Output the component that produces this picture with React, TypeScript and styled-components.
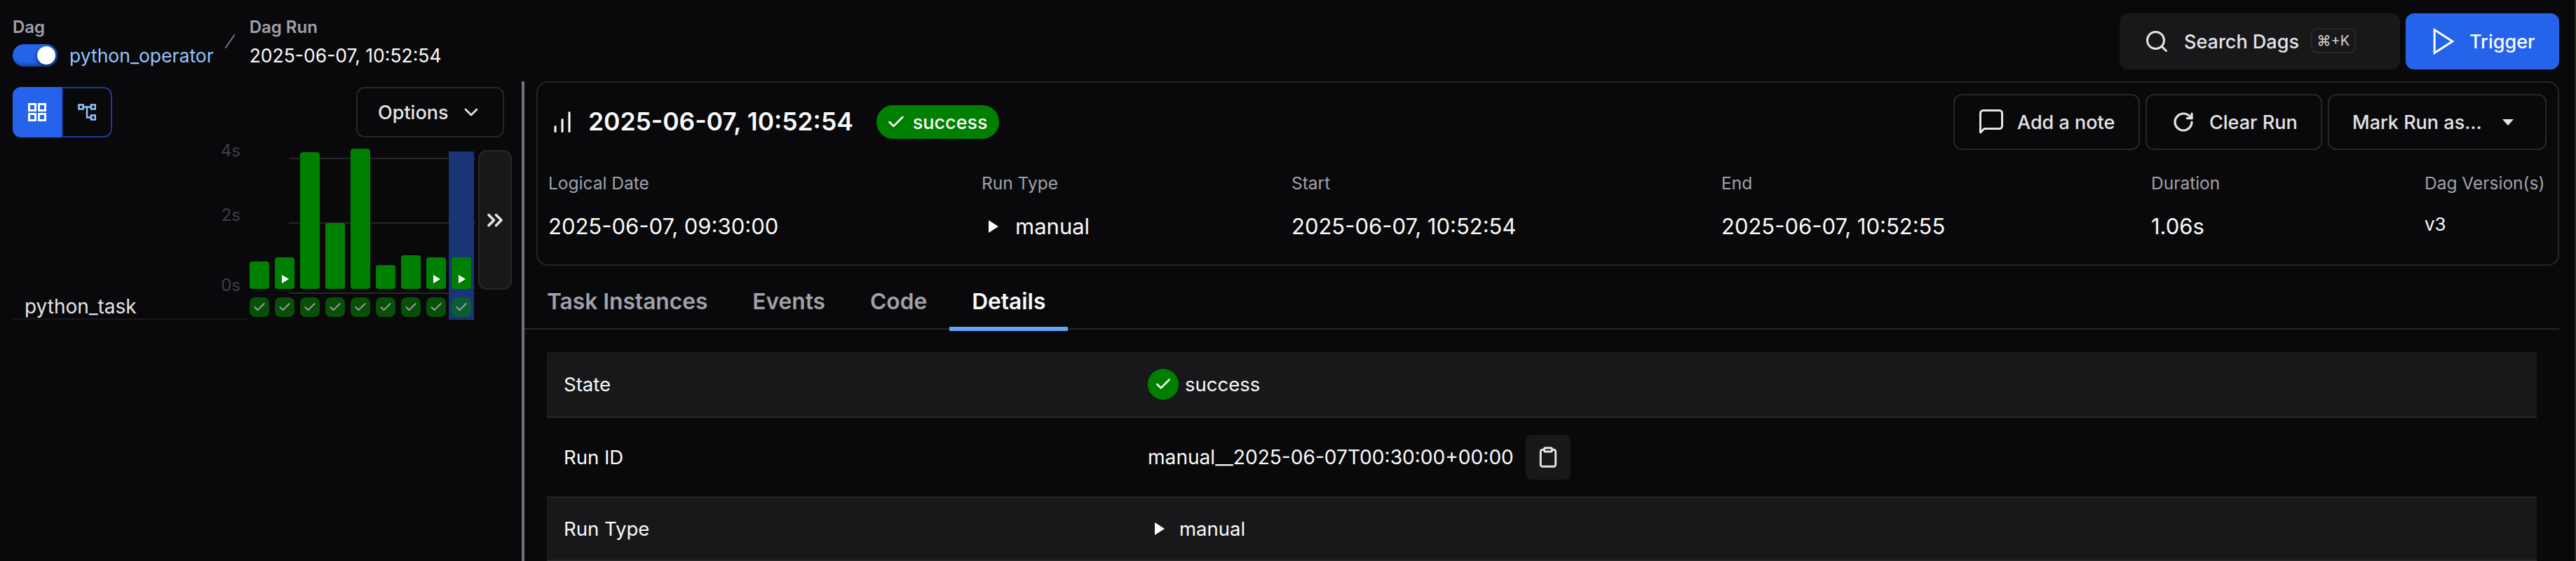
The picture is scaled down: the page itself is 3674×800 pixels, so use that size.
import { createGlobalStyle } from "styled-components";
import styled from "styled-components";
import { Check, ChevronDown, ChevronsRight, Clipboard, RotateCw, Search } from "lucide-react";

const GlobalStyle = createGlobalStyle`
  html, body {
    margin: 0;
    background: #09090b;
  }
  body {
    font-family: Inter, "Noto Sans", sans-serif;
    font-size: 27px;
    color: #fafafa;
    overflow: hidden;
  }
  * {
    box-sizing: border-box;
  }
`;

const Page = styled.div`
  width: 3674px;
  height: 800px;
  display: flex;
  flex-direction: column;
  background: #09090b;
  border-right: 2px solid #27272a;
  overflow: hidden;
`;

/* header */
const Header = styled.header`
  height: 116px;
  flex: none;
  display: flex;
  justify-content: space-between;
  padding: 19px 22px 0 18px;
`;

const Crumbs = styled.div`
  display: flex;
  padding-top: 10px;
`;

const Crumb = styled.div`
  display: flex;
  flex-direction: column;
`;

const CrumbLabel = styled.span`
  font-size: 24px;
  line-height: 20px;
  font-weight: 600;
  color: #a1a1aa;
`;

const CrumbRow = styled.div`
  margin-top: 14px;
  height: 32px;
  display: flex;
  align-items: center;
  gap: 17px;
  font-size: 26.5px;
  white-space: nowrap;
`;

const CrumbSlash = styled.svg`
  margin: 20px 21px 0 16px;
  width: 14px;
  height: 20px;
  stroke: #71717a;
  stroke-width: 2;
`;

const Switch = styled.span`
  position: relative;
  width: 64px;
  height: 32px;
  border-radius: 16px;
  background: #2563eb;
  box-shadow: inset -3px -3px 4px #1e3a8a;
`;

const SwitchKnob = styled.span`
  position: absolute;
  right: 3px;
  top: 3px;
  width: 26px;
  height: 26px;
  border-radius: 50%;
  background: #fff;
  box-shadow: -2px 2px 4px rgba(0, 0, 0, 0.35);
`;

const DagLink = styled.span`
  color: #93c5fd;
`;

const HeaderActions = styled.div`
  display: flex;
  gap: 8px;
  height: 80px;
`;

const SearchButton = styled.div`
  width: 400px;
  display: flex;
  align-items: center;
  padding-left: 35px;
  gap: 21px;
  border-radius: 12px;
  background: #18181b;
  font-weight: 500;
  color: #e4e4e7;
`;

const Kbd = styled.span`
  width: 64px;
  height: 36px;
  margin-left: -4px;
  margin-top: -2px;
  display: flex;
  align-items: center;
  justify-content: center;
  border: 2px solid #27272a;
  border-radius: 8px;
  font-size: 20px;
  font-weight: 400;
  color: #d4d4d8;
`;

const TriggerButton = styled.div`
  width: 219px;
  display: flex;
  align-items: center;
  padding-left: 32px;
  gap: 15px;
  border-radius: 12px;
  background: #2563eb;
  font-weight: 500;
`;

/* body */
const Body = styled.div`
  flex: 1;
  display: flex;
  min-height: 0;
`;

const LeftPanel = styled.section`
  width: 744px;
  flex: none;
  padding-top: 8px;
`;

const Divider = styled.div`
  width: 4px;
  flex: none;
  background: #71717a;
`;

const Toolbar = styled.div`
  height: 72px;
  display: flex;
  justify-content: space-between;
  padding: 0 25px 0 18px;
`;

const ViewToggle = styled.div`
  display: flex;
`;

const ViewButton = styled.div<{ $active?: boolean }>`
  width: ${(p) => (p.$active ? "70px" : "72px")};
  display: flex;
  align-items: center;
  justify-content: center;
  background: ${(p) => (p.$active ? "#2563eb" : "transparent")};
  border: ${(p) => (p.$active ? "none" : "2px solid #1e3a8a")};
  border-radius: ${(p) => (p.$active ? "12px 0 0 12px" : "0 12px 12px 0")};
`;

const OptionsButton = styled.div`
  width: 211px;
  display: flex;
  align-items: center;
  padding-left: 29px;
  gap: 17px;
  border: 2px solid #27272a;
  border-radius: 12px;
  font-weight: 500;
  color: #e4e4e7;
`;

const GridSection = styled.div`
  display: flex;
  padding-left: 18px;
  margin-top: 4px;
`;

const TaskColumn = styled.div`
  width: 334px;
  height: 256px;
  display: flex;
  align-items: flex-end;
`;

const TaskName = styled.div`
  width: 100%;
  height: 37px;
  padding: 3px 0 0 17px;
  font-size: 28px;
  line-height: 30px;
  border-bottom: 2px solid #18181b;
  color: #e4e4e7;
`;

const RunColumns = styled.div`
  position: relative;
  width: 324px;
`;

const GridLine = styled.div<{ $top: number }>`
  position: absolute;
  left: 60px;
  width: 266px;
  top: ${(p) => p.$top}px;
  height: 2px;
  background: #27272a;
`;

const AxisLabel = styled.span<{ $top: number }>`
  position: absolute;
  right: 100%;
  margin-right: 9px;
  top: ${(p) => p.$top}px;
  font-size: 24px;
  line-height: 30px;
  color: #3f3f46;
`;

const Highlight = styled.div`
  position: absolute;
  left: 288px;
  top: 16px;
  width: 36px;
  height: 240px;
  background: #1a3577;
`;

const BarRow = styled.div`
  position: relative;
  height: 212px;
  display: flex;
  align-items: flex-end;
`;

const Bar = styled.div<{ $height: number }>`
  position: relative;
  width: 28px;
  margin: 0 4px;
  height: ${(p) => p.$height}px;
  border-radius: 4px;
  background: #008000;
`;

const BarPlay = styled.svg`
  position: absolute;
  left: 10px;
  bottom: 8px;
  width: 10px;
  height: 12px;
  fill: #fff;
`;

const TileRow = styled.div`
  position: relative;
  display: flex;
  margin-top: 12px;
`;

const Tile = styled.div<{ $selected?: boolean }>`
  width: 28px;
  height: 28px;
  margin: 0 4px;
  display: flex;
  align-items: center;
  justify-content: center;
  border-radius: 8px;
  background: ${(p) => (p.$selected ? "#0d5c33" : "#084f08")};
  color: #a1a1aa;
`;

const ExpandButton = styled.div`
  width: 48px;
  height: 199px;
  margin: 14px 0 0 6px;
  display: flex;
  align-items: center;
  justify-content: center;
  border: 2px solid #27272a;
  border-radius: 12px;
  background: #18181b;
  color: #e4e4e7;
`;

const RightPanel = styled.section`
  flex: 1;
  min-width: 0;
  padding-right: 22px;
`;

const Card = styled.div`
  margin-left: 17px;
  height: 263px;
  padding: 16px 16px 0 15px;
  border: 2px solid #27272a;
  border-radius: 16px;
`;

const TitleRow = styled.div`
  display: flex;
  justify-content: space-between;
  height: 80px;
`;

const TitleLeft = styled.div`
  display: flex;
  align-items: center;
  padding-left: 8px;
`;

const RunTitle = styled.h1`
  margin: 0 33px 0 25px;
  font-size: 35.4px;
  line-height: 40px;
  font-weight: 600;
`;

const StatusBadge = styled.span`
  height: 48px;
  width: 175px;
  display: flex;
  align-items: center;
  gap: 10px;
  padding-left: 14px;
  border-radius: 24px;
  background: #008000;
  font-weight: 500;
`;

const Actions = styled.div`
  display: flex;
  gap: 8px;
`;

const ActionButton = styled.div<{ $width: number; $pad: number; $gap: number }>`
  width: ${(p) => p.$width}px;
  display: flex;
  align-items: center;
  padding-left: ${(p) => p.$pad}px;
  gap: ${(p) => p.$gap}px;
  border: 2px solid #27272a;
  border-radius: 12px;
  font-weight: 500;
  color: #e4e4e7;
  white-space: nowrap;
`;

const CaretDown = styled.svg`
  width: 16px;
  height: 9px;
  fill: #e4e4e7;
`;

const InfoGrid = styled.div`
  display: grid;
  grid-template-columns: 618px 442px 613px 613px 390px 1fr;
  margin-top: 32px;
`;

const InfoItem = styled.div`
  display: flex;
  flex-direction: column;
  gap: 32px;
`;

const InfoLabel = styled.span`
  font-size: 24.5px;
  line-height: 30px;
  color: #a1a1aa;
  white-space: nowrap;
`;

const InfoValue = styled.span`
  line-height: 30px;
  font-size: 31px;
  display: flex;
  align-items: center;
  white-space: nowrap;
`;

const VersionValue = styled.span`
  font-size: 26px;
  line-height: 30px;
  margin-top: -3px;
`;

const PlayGlyph = styled.svg<{ $gap: number }>`
  width: 14px;
  height: 18px;
  fill: #fff;
  margin: 0 ${(p) => p.$gap}px 0 10px;
`;

const Tabs = styled.nav`
  height: 91px;
  display: flex;
  align-items: flex-end;
  border-bottom: 2px solid #27272a;
`;

const Tab = styled.div<{ $active?: boolean }>`
  height: 59px;
  margin-bottom: -4px;
  padding: 0 32px;
  font-size: 31.7px;
  line-height: 34px;
  font-weight: 600;
  color: ${(p) => (p.$active ? "#fafafa" : "#a1a1aa")};
  border-bottom: 6px solid ${(p) => (p.$active ? "#60a5fa" : "transparent")};
`;

const DetailTable = styled.div`
  margin: 32px 32px 0 32px;
`;

const DetailRow = styled.div<{ $height: number; $striped?: boolean }>`
  height: ${(p) => p.$height}px;
  display: grid;
  grid-template-columns: 833px 1fr;
  align-items: center;
  padding-left: 24px;
  font-size: 27.5px;
  background: ${(p) => (p.$striped ? "#18181b" : "transparent")};
  border-bottom: 2px solid #27272a;
`;

const DetailValue = styled.div`
  display: flex;
  align-items: center;
  white-space: nowrap;
`;

const RunIdText = styled.span`
  font-size: 28.1px;
`;

const StateDot = styled.span`
  width: 44px;
  height: 44px;
  margin-right: 9px;
  display: flex;
  align-items: center;
  justify-content: center;
  border-radius: 50%;
  background: #008000;
`;

const CopyButton = styled.div`
  width: 64px;
  height: 64px;
  margin-left: 17px;
  display: flex;
  align-items: center;
  justify-content: center;
  border-radius: 8px;
  background: #18181b;
  color: #e4e4e7;
`;

const bars = [
  { height: 39 },
  { height: 45, play: true },
  { height: 195 },
  { height: 94 },
  { height: 200 },
  { height: 34 },
  { height: 48 },
  { height: 45, play: true },
  { height: 45, play: true },
];

const info = [
  { label: "Logical Date", value: "2025-06-07, 09:30:00" },
  { label: "Run Type", value: "manual", play: true },
  { label: "Start", value: "2025-06-07, 10:52:54" },
  { label: "End", value: "2025-06-07, 10:52:55" },
  { label: "Duration", value: "1.06s" },
];

const GridIcon = () => (
  <svg width="26" height="26" viewBox="0 0 26 26" fill="none" stroke="#fff" strokeWidth="3">
    <rect x="1.5" y="1.5" width="9" height="9" />
    <rect x="15.5" y="1.5" width="9" height="9" />
    <rect x="1.5" y="15.5" width="9" height="9" />
    <rect x="15.5" y="15.5" width="9" height="9" />
  </svg>
);

const GraphIcon = () => (
  <svg width="26" height="26" viewBox="0 0 26 26" fill="none" stroke="#93c5fd" strokeWidth="2.5">
    <rect x="1.5" y="2.5" width="6" height="6" />
    <rect x="19" y="2.5" width="6" height="6" />
    <rect x="19" y="17.5" width="6" height="6" />
    <path d="M7.5 5.5H19M13 5.5V20.5H19" />
  </svg>
);

const NoteIcon = () => (
  <svg width="34" height="36" viewBox="0 0 34 36" fill="none" stroke="#e4e4e7" strokeWidth="3" strokeLinejoin="round">
    <path d="M1.5 33V5.5a4 4 0 0 1 4-4h23a4 4 0 0 1 4 4v18a4 4 0 0 1-4 4H7z" />
  </svg>
);

const BarsIcon = () => (
  <svg width="24" height="30" viewBox="0 0 24 30" fill="none" stroke="#fff" strokeWidth="3" strokeLinecap="round">
    <path d="M2 21.5V28.5M12 11.5V28.5M22 1.5V28.5" />
  </svg>
);

const Play = ({ gap }: { gap: number }) => (
  <PlayGlyph $gap={gap} viewBox="0 0 14 18">
    <path d="M0 0l14 9-14 9z" />
  </PlayGlyph>
);

const App = () => {
  return (
    <Page>
      <GlobalStyle />
      <Header>
        <Crumbs>
          <Crumb>
            <CrumbLabel>Dag</CrumbLabel>
            <CrumbRow>
              <Switch>
                <SwitchKnob />
              </Switch>
              <DagLink>python_operator</DagLink>
            </CrumbRow>
          </Crumb>
          <CrumbSlash viewBox="0 0 14 20">
            <path d="M14 0L0 20" />
          </CrumbSlash>
          <Crumb>
            <CrumbLabel>Dag Run</CrumbLabel>
            <CrumbRow>2025-06-07, 10:52:54</CrumbRow>
          </Crumb>
        </Crumbs>
        <HeaderActions>
          <SearchButton>
            <Search size={36} strokeWidth={2} />
            <span>Search Dags</span>
            <Kbd>⌘+K</Kbd>
          </SearchButton>
          <TriggerButton>
            <svg width="44" height="44" viewBox="0 0 24 24" fill="none" stroke="#fff" strokeWidth="1.6">
              <path d="M5 3l14 9-14 9z" />
            </svg>
            <span>Trigger</span>
          </TriggerButton>
        </HeaderActions>
      </Header>
      <Body>
        <LeftPanel>
          <Toolbar>
            <ViewToggle>
              <ViewButton $active>
                <GridIcon />
              </ViewButton>
              <ViewButton>
                <GraphIcon />
              </ViewButton>
            </ViewToggle>
            <OptionsButton>
              <span>Options</span>
              <ChevronDown size={32} strokeWidth={2} />
            </OptionsButton>
          </Toolbar>
          <GridSection>
            <TaskColumn>
              <TaskName>python_task</TaskName>
            </TaskColumn>
            <RunColumns>
              <GridLine $top={25} />
              <GridLine $top={117} />
              <GridLine $top={217} />
              <AxisLabel $top={0}>4s</AxisLabel>
              <AxisLabel $top={92}>2s</AxisLabel>
              <AxisLabel $top={192}>0s</AxisLabel>
              <Highlight />
              <BarRow>
                {bars.map((bar, i) => (
                  <Bar key={i} $height={bar.height}>
                    {bar.play && (
                      <BarPlay viewBox="0 0 10 12">
                        <path d="M0 0l10 6-10 6z" />
                      </BarPlay>
                    )}
                  </Bar>
                ))}
              </BarRow>
              <TileRow>
                {bars.map((_, i) => (
                  <Tile key={i} $selected={i === bars.length - 1}>
                    <Check size={20} strokeWidth={2.2} />
                  </Tile>
                ))}
              </TileRow>
            </RunColumns>
            <ExpandButton>
              <ChevronsRight size={36} strokeWidth={2.4} />
            </ExpandButton>
          </GridSection>
        </LeftPanel>
        <Divider />
        <RightPanel>
          <Card>
            <TitleRow>
              <TitleLeft>
                <BarsIcon />
                <RunTitle>2025-06-07, 10:52:54</RunTitle>
                <StatusBadge>
                  <Check size={28} strokeWidth={2.2} />
                  success
                </StatusBadge>
              </TitleLeft>
              <Actions>
                <ActionButton $width={266} $pad={35} $gap={20}>
                  <NoteIcon />
                  Add a note
                </ActionButton>
                <ActionButton $width={252} $pad={36} $gap={21}>
                  <RotateCw size={32} strokeWidth={2.4} />
                  Clear Run
                </ActionButton>
                <ActionButton $width={312} $pad={33} $gap={29}>
                  Mark Run as...
                  <CaretDown viewBox="0 0 16 9">
                    <path d="M0 0h16l-8 9z" />
                  </CaretDown>
                </ActionButton>
              </Actions>
            </TitleRow>
            <InfoGrid>
              {info.map((item) => (
                <InfoItem key={item.label}>
                  <InfoLabel>{item.label}</InfoLabel>
                  <InfoValue>
                    {item.play && <Play gap={24} />}
                    {item.value}
                  </InfoValue>
                </InfoItem>
              ))}
              <InfoItem>
                <InfoLabel>Dag Version(s)</InfoLabel>
                <VersionValue>v3</VersionValue>
              </InfoItem>
            </InfoGrid>
          </Card>
          <Tabs>
            <Tab>Task Instances</Tab>
            <Tab>Events</Tab>
            <Tab>Code</Tab>
            <Tab $active>Details</Tab>
          </Tabs>
          <DetailTable>
            <DetailRow $height={94} $striped>
              <span>State</span>
              <DetailValue>
                <StateDot>
                  <Check size={26} strokeWidth={2.4} />
                </StateDot>
                success
              </DetailValue>
            </DetailRow>
            <DetailRow $height={114}>
              <span>Run ID</span>
              <DetailValue>
                <RunIdText>manual__2025-06-07T00:30:00+00:00</RunIdText>
                <CopyButton>
                  <Clipboard size={32} strokeWidth={2.2} />
                </CopyButton>
              </DetailValue>
            </DetailRow>
            <DetailRow $height={90} $striped>
              <span>Run Type</span>
              <DetailValue>
                <Play gap={21} />
                manual
              </DetailValue>
            </DetailRow>
          </DetailTable>
        </RightPanel>
      </Body>
    </Page>
  );
};

export default App;
